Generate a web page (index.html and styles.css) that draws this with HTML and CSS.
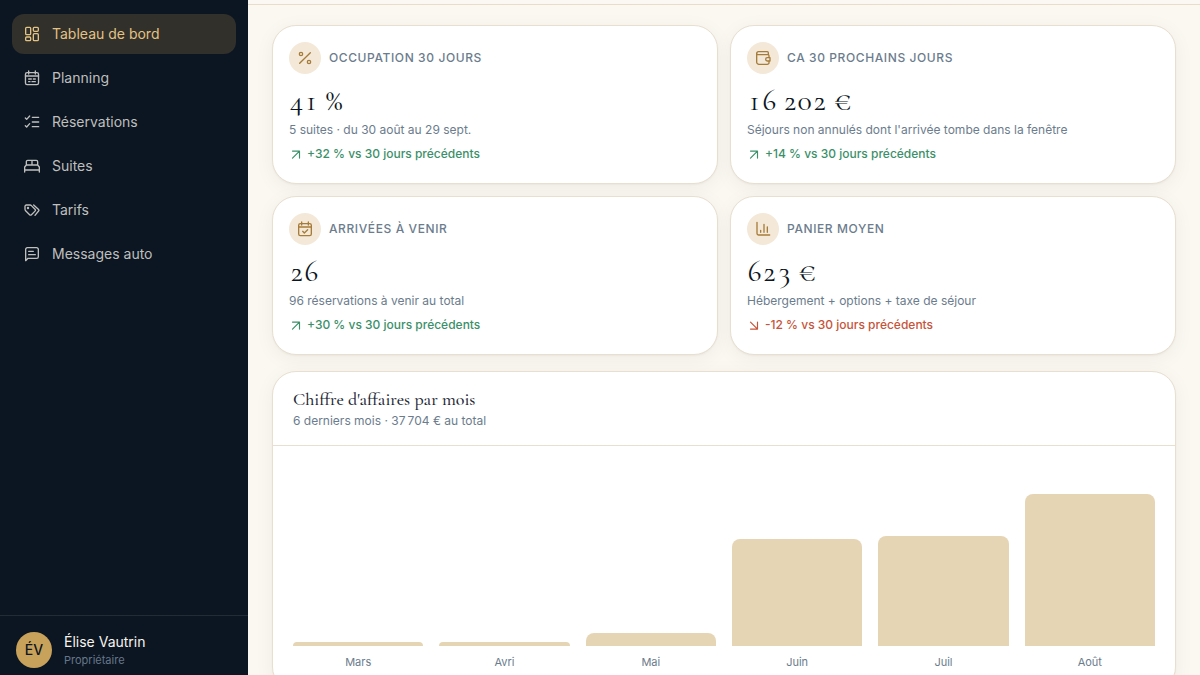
FILE: index.html
```html
<!DOCTYPE html>
<html lang="fr">
<head>
<meta charset="utf-8">
<meta name="viewport" content="width=device-width, initial-scale=1">
<title>Tableau de bord</title>
<link rel="stylesheet" href="styles.css">
</head>
<body>
<div class="app">
  <aside class="sidebar">
    <nav class="nav" aria-label="Navigation principale">
      <a class="nav-link active" href="#" aria-current="page">
        <svg class="icon" viewBox="0 0 24 24"><rect x="2.500" y="2" width="7.500" height="11" rx="1.500"/><rect x="14" y="2" width="7.500" height="6" rx="1.500"/><rect x="2.500" y="16.500" width="7.500" height="5.500" rx="1.500"/><rect x="14" y="11.500" width="7.500" height="10.500" rx="1.500"/></svg>
        Tableau de bord</a>
      <a class="nav-link" href="#">
        <svg class="icon" viewBox="0 0 24 24"><rect x="2.200" y="4" width="19.600" height="18" rx="2.500"/><path d="M2.200 9h19.600M7 1.500v4.500M17 1.500v4.500M7 13.500h4M14 13.500h3M7 17.500h2M12 17.500h5"/></svg>
        Planning</a>
      <a class="nav-link" href="#">
        <svg class="icon" viewBox="0 0 24 24"><path d="M12.500 5H22M12.500 12H22M12.500 19H22M2 6l2 2 4.500-5M2 17.500l2 2 4.500-5"/></svg>
        Réservations</a>
      <a class="nav-link" href="#">
        <svg class="icon" viewBox="0 0 24 24"><path d="M1 21v-7.500l2.500-3V5.500a2 2 0 0 1 2-2h13a2 2 0 0 1 2 2v5l2.500 3V21M1 18h22M3.500 10.500h17M12 3.500v7"/></svg>
        Suites</a>
      <a class="nav-link" href="#">
        <svg class="icon" viewBox="0 0 24 24"><path d="M1.500 6.500a2 2 0 0 1 2-2H9a3 3 0 0 1 2.100.9l5.400 5.500a2 2 0 0 1 0 2.800l-5.300 5.300a2 2 0 0 1-2.800 0l-6-6a3 3 0 0 1-.9-2.100zM14.500 4.500l7.400 6.900a1.500 1.500 0 0 1 0 2.100L16.500 20"/><circle cx="6" cy="9" r=".8"/></svg>
        Tarifs</a>
      <a class="nav-link" href="#">
        <svg class="icon" viewBox="0 0 24 24"><path d="M2.500 22V5a2.500 2.500 0 0 1 2.500-2.500h14A2.500 2.500 0 0 1 21.500 5v11A2.500 2.500 0 0 1 19 18.500H6zM7 8h7M7 13h10"/></svg>
        Messages auto</a>
    </nav>
    <div class="profile">
      <span class="avatar" aria-hidden="true">ÉV</span>
      <div>
        <div class="profile-name">Élise Vautrin</div>
        <div class="profile-role">Propriétaire</div>
      </div>
    </div>
  </aside>
  <main class="main">
    <div class="topbar"></div>
    <div class="content">
      <section class="stats" aria-label="Indicateurs">
        <article class="card stat">
          <header class="stat-head">
            <span class="badge"><svg class="icon" viewBox="0 0 24 24"><path d="M20 4L4 20"/><circle cx="6" cy="6" r="2.500"/><circle cx="18" cy="18" r="2.500"/></svg></span>
            <h2 class="stat-label">Occupation 30 jours</h2>
          </header>
          <div class="stat-value">41 %</div>
          <p class="stat-note">5 suites · du 30 août au 29 sept.</p>
          <p class="trend up"><svg class="arrow" viewBox="0 0 24 24"><path d="M6 19L18 7M6 7h12v12"/></svg>+32 % vs 30 jours précédents</p>
        </article>
        <article class="card stat">
          <header class="stat-head">
            <span class="badge"><svg class="icon" viewBox="0 0 24 24"><path d="M21 11V8.500A1.500 1.500 0 0 0 19.500 7H4.500A2 2 0 0 1 2.500 5a2.500 2.500 0 0 1 2.500-2.500h13.500A1.500 1.500 0 0 1 20 4v3M2.500 5v13A3.500 3.500 0 0 0 6 21.500h12.500a2.500 2.500 0 0 0 2.500-2.500v-2"/><path d="M22.500 11.500h-4a2.500 2.500 0 0 0 0 5h4z"/></svg></span>
            <h2 class="stat-label">CA 30 prochains jours</h2>
          </header>
          <div class="stat-value">16&#8239;202 €</div>
          <p class="stat-note">Séjours non annulés dont l'arrivée tombe dans la fenêtre</p>
          <p class="trend up"><svg class="arrow" viewBox="0 0 24 24"><path d="M6 19L18 7M6 7h12v12"/></svg>+14 % vs 30 jours précédents</p>
        </article>
        <article class="card stat">
          <header class="stat-head">
            <span class="badge"><svg class="icon" viewBox="0 0 24 24"><rect x="2.500" y="4" width="19" height="18" rx="2.500"/><path d="M2.500 9h19M7 1.500v4.500M17 1.500v4.500M8.500 15.500l2.500 2.500 5-5"/></svg></span>
            <h2 class="stat-label">Arrivées à venir</h2>
          </header>
          <div class="stat-value">26</div>
          <p class="stat-note">96 réservations à venir au total</p>
          <p class="trend up"><svg class="arrow" viewBox="0 0 24 24"><path d="M6 19L18 7M6 7h12v12"/></svg>+30 % vs 30 jours précédents</p>
        </article>
        <article class="card stat">
          <header class="stat-head">
            <span class="badge"><svg class="icon" viewBox="0 0 24 24"><path d="M3 2v16.500A2.500 2.500 0 0 0 5.500 21H22M8.500 14v3M13.500 5v12M18.500 9v8"/></svg></span>
            <h2 class="stat-label">Panier moyen</h2>
          </header>
          <div class="stat-value">623 €</div>
          <p class="stat-note">Hébergement + options + taxe de séjour</p>
          <p class="trend down"><svg class="arrow" viewBox="0 0 24 24"><path d="M6 7l12 12M6 19h12V7"/></svg>-12 % vs 30 jours précédents</p>
        </article>
      </section>
      <section class="card">
        <header class="chart-head">
          <h2 class="chart-title">Chiffre d'affaires par mois</h2>
          <p class="chart-note">6 derniers mois · 37&#8239;704 € au total</p>
        </header>
        <div class="chart">
          <div class="column"><div class="bar" style="height:4px"></div><span>Mars</span></div>
          <div class="column"><div class="bar" style="height:4px"></div><span>Avri</span></div>
          <div class="column"><div class="bar" style="height:13px"></div><span>Mai</span></div>
          <div class="column"><div class="bar" style="height:107px"></div><span>Juin</span></div>
          <div class="column"><div class="bar" style="height:110px"></div><span>Juil</span></div>
          <div class="column"><div class="bar" style="height:152px"></div><span>Août</span></div>
        </div>
      </section>
    </div>
  </main>
</div>
</body>
</html>
```
FILE: styles.css
```css
* { box-sizing: border-box; }
body, h2, p { margin: 0; }
body {
  font-family: Inter, "Liberation Sans", sans-serif;
  background: #fbf8f1;
  color: #0c1622;
}
.app { display: flex; height: 100vh; }
.sidebar {
  flex: 0 0 248px;
  display: flex;
  flex-direction: column;
  background: #0c1622;
}
.nav {
  flex: 1;
  display: flex;
  flex-direction: column;
  gap: 4px;
  padding: 14px 12px;
}
.nav-link {
  display: flex;
  align-items: center;
  gap: 12px;
  height: 40px;
  padding: 0 12px;
  border-radius: 12px;
  font-size: 14px;
  line-height: 20px;
  color: #bfbfbd;
  text-decoration: none;
}
.nav-link.active { background: #31302b; color: #e3c383; }
.icon, .arrow {
  flex: none;
  width: 16px;
  height: 16px;
  fill: none;
  stroke: currentColor;
  stroke-width: 2;
  stroke-linecap: round;
  stroke-linejoin: round;
}
.profile {
  display: flex;
  align-items: center;
  gap: 12px;
  padding: 16px 16px 7px;
  border-top: 1px solid #222c37;
}
.avatar {
  display: grid;
  place-items: center;
  width: 36px;
  height: 36px;
  border-radius: 50%;
  background: #c8a25b;
  font-size: 14px;
  line-height: 20px;
  font-weight: 500;
}
.profile-name { font-size: 14px; line-height: 20px; color: #f7f4ec; }
.profile-role { font-size: 11px; line-height: 16px; color: #66778a; }
.main { flex: 1; min-width: 0; overflow: auto; scrollbar-width: none; }
.topbar { height: 5px; border-bottom: 1px solid #e8dccb; background: #fbf8f4; }
.content { display: flex; flex-direction: column; gap: 16px; padding: 20px 24px; }
.stats { display: grid; grid-template-columns: 1fr 1fr; gap: 12px; }
.card {
  background: #fff;
  border: 1px solid #e8dfd0;
  border-radius: 24px;
  box-shadow: 0 1px 2px rgba(12, 22, 34, .04), 0 4px 20px rgba(12, 22, 34, .05);
}
.stat { padding: 16px 16px 19px; }
.stat-head { display: flex; align-items: center; gap: 8px; }
.badge {
  display: grid;
  place-items: center;
  width: 32px;
  height: 32px;
  border-radius: 50%;
  background: #f4e9d8;
  color: #a67c3a;
}
.stat-label {
  font-size: 12px;
  font-weight: 500;
  line-height: 16px;
  letter-spacing: .6px;
  text-transform: uppercase;
  color: #6b7c8d;
}
.stat-value {
  margin: 9px 0 1px;
  font-family: "Cormorant Garamond", Cormorant, "Liberation Serif", serif;
  font-size: 30px;
  font-weight: 400;
  font-variant-numeric: tabular-nums;
  line-height: 36px;
}
.stat-note { font-size: 12px; line-height: 20px; color: #6b7c8d; }
.trend {
  display: flex;
  align-items: center;
  gap: 4px;
  margin-top: 4px;
  font-size: 12px;
  font-weight: 500;
  line-height: 20px;
}
.arrow { width: 14px; height: 14px; stroke-width: 2; }
.up { color: #3b8f69; }
.down { color: #c6543a; }
.chart-head { padding: 16px 20px 15px; border-bottom: 1px solid #e8dfd0; }
.chart-title {
  font-family: "Cormorant Garamond", Cormorant, "Liberation Serif", serif;
  font-size: 18px;
  font-weight: 500;
  line-height: 22px;
  color: #1d2835;
}
.chart-note { margin-top: 2px; font-size: 12px; line-height: 18px; color: #6b7c8d; }
.chart { display: flex; gap: 16px; height: 244px; padding: 20px; }
.column {
  flex: 1;
  display: flex;
  flex-direction: column;
  justify-content: flex-end;
  gap: 8px;
  font-size: 11px;
  line-height: 16px;
  text-align: center;
  color: #6b7c8d;
}
.bar { background: #e5d5b5; border-radius: 8px 8px 0 0; }
```
